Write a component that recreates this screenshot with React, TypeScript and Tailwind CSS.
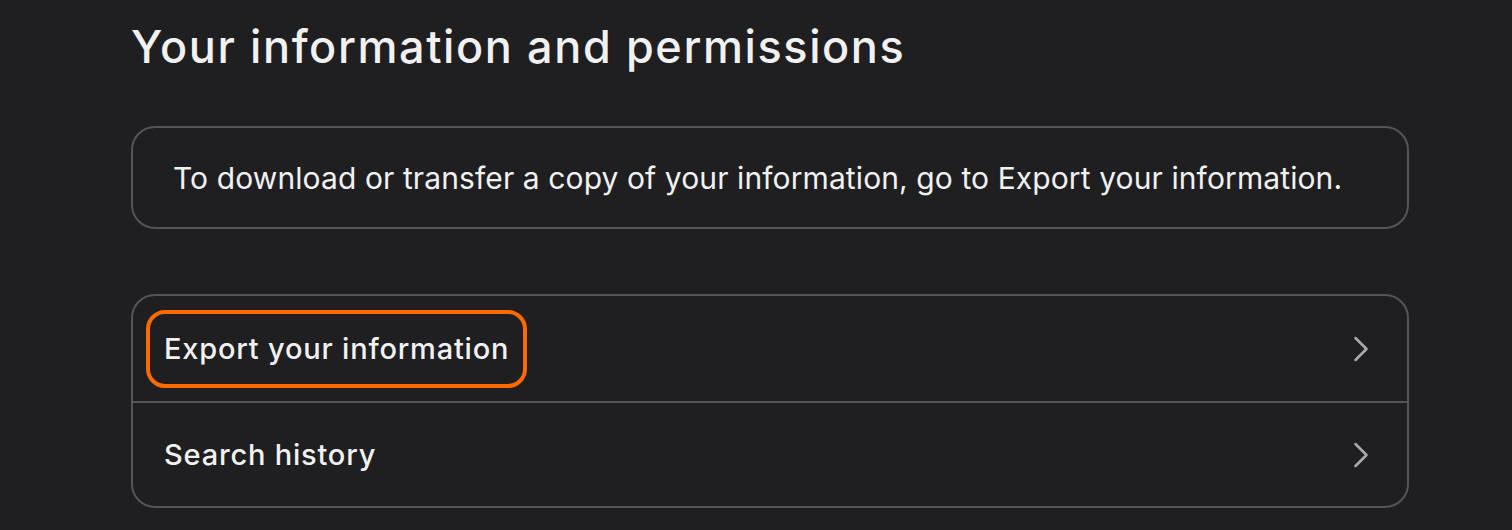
import { ChevronRight } from 'lucide-react'

const rows = ['Export your information', 'Search history']

export default function App() {
  return (
    <div className="min-h-[530px] w-full bg-[#1f1f21] pl-[131px] pt-[16px] font-['Inter',sans-serif] text-[#f1f1f2]">
      <div className="w-[1278px]">
        <h1 className="text-[45px] font-medium leading-[62px] tracking-[1.6px]">Your information and permissions</h1>

        <div className="mt-[48px] flex h-[103px] items-center rounded-[24px] border-2 border-[#53555a] px-[40px]">
          <p className="text-[30px] leading-none tracking-[0.1px]">
            To download or transfer a copy of your information, go to Export your information.
          </p>
        </div>

        <div className="mt-[65px] overflow-hidden rounded-[24px] border-2 border-[#53555a]">
          {rows.map((label, i) => (
            <div
              key={label}
              className={`flex h-[105px] items-center justify-between pl-[17px] pr-[24px] ${i > 0 ? 'border-t-2 border-[#53555a]' : ''}`}
            >
              <span
                className={`rounded-[15px] px-[14px] py-[20px] text-[29px] font-medium leading-[30px] tracking-[0.8px] ${i === 0 ? 'outline-4 outline-solid outline-[#ff6a00]' : ''}`}
              >
                {label}
              </span>
              <ChevronRight size={44} strokeWidth={1.4} className="text-[#a8a9ad]" />
            </div>
          ))}
        </div>
      </div>
    </div>
  )
}
